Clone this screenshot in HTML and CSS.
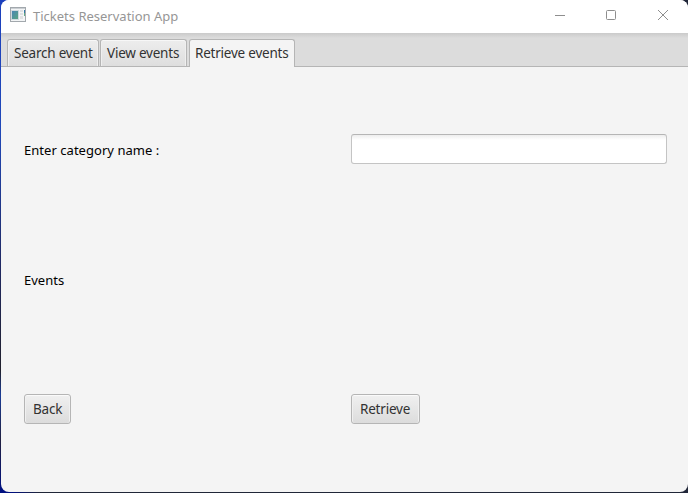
FILE: index.html
```html
<!DOCTYPE html>
<html lang="en">
<head>
<meta charset="utf-8">
<title>Tickets Reservation App</title>
<link rel="stylesheet" href="styles.css">
</head>
<body>
<div class="window">
  <header class="titlebar">
    <svg class="app-icon" width="18" height="16" viewBox="0 0 18 16">
      <defs><linearGradient id="screen" x1="0" y1="0" x2="1" y2="1"><stop offset="0" stop-color="#4a86b4"/><stop offset="1" stop-color="#58a583"/></linearGradient></defs>
      <rect x="1.500" y=".5" width="15" height="14" fill="#f3f5f6" stroke="#a2a8ad"/>
      <path d="M1 1h16" stroke="#a2a8ad"/>
      <rect x="2" y="3" width="8" height="10" fill="#cfd9df"/>
      <rect x="3" y="4" width="6" height="8" fill="url(#screen)"/>
      <path d="M11 3h3v2h-3zM11 6h3v2h-3zM11 9h3v3h-3z" fill="#dfe1e3"/>
      <path d="M15 3h1v3h-1z" fill="#3478a6"/><path d="M15 6h1v3h-1z" fill="#65aa87"/>
    </svg>
    <h1 class="title"><span>Tickets Reservation App</span></h1>
    <svg class="controls" width="114" height="12" viewBox="0 0 114 12" fill="none" stroke="#8e8e8e">
      <path d="M1 6.500h10"/>
      <rect x="52.500" y="1.500" width="9" height="9" rx="1"/>
      <path d="M104 1l10 10M114 1l-10 10"/>
    </svg>
  </header>
  <nav class="tabs">
    <div class="tab search"><span>Search event</span></div>
    <div class="tab view"><span>View events</span></div>
    <div class="tab active"><span>Retrieve events</span></div>
  </nav>
  <main class="form">
    <label class="category" for="category"><span>Enter category name :</span></label>
    <input id="category" type="text">
    <div class="events"><span>Events</span></div>
    <div></div>
    <button class="back"><span>Back</span></button>
    <button class="retrieve"><span>Retrieve</span></button>
  </main>
</div>
</body>
</html>
```
FILE: styles.css
```css
* { box-sizing: border-box; }
body {
  margin: 0;
  height: 493px;
  overflow: hidden;
  padding: 0 0 1px 1px;
  background: linear-gradient(90deg, transparent 12px, #202638 40px), linear-gradient(#1c40bd 0, #2048b8 130px, #202860 270px, #20202c 370px, #1a3c96 395px, #202040 440px, #001080 490px);
  font: 13.500px/18px "Noto Sans", "Open Sans", sans-serif;
  letter-spacing: -.22px;
  color: #323232;
}
span { white-space: nowrap; }
.window {
  height: 492px;
  border-radius: 8px;
  overflow: hidden;
  background: #f4f4f4;
}
.titlebar {
  display: flex;
  align-items: flex-start;
  height: 33px;
  padding: 7px 20px 0 8px;
  background: #fff;
}
.app-icon { flex: none; }
.title {
  flex: 1;
  margin: 0 0 0 6px;
  font-size: 13px;
  font-weight: 400;
  color: #969696;
  letter-spacing: 0;
}
.controls { margin-top: 2px; flex: none; }
.tabs {
  display: flex;
  align-items: flex-end;
  height: 34px;
  padding-left: 6px;
  border-bottom: 1px solid #b5b5b5;
  background: linear-gradient(#cacaca, #dcdcdc 5px);
}
.tab {
  height: 27px;
  padding: 4px 0 0 6px;
  border: 1px solid #b5b5b5;
  border-bottom: 0;
  border-radius: 3px 3px 0 0;
  background: linear-gradient(#ededed, #dedede);
  box-shadow: inset 0 1px #f7f7f7, inset 1px 0 #efefef, inset -1px 0 #efefef;
}
.search { width: 92px; margin-right: 1px; }
.view { width: 87px; margin-right: 2px; }
.active {
  width: 106px;
  height: 28px;
  margin-bottom: -1px;
  padding-left: 5px;
  background: #f4f4f4;
  box-shadow: none;
}
.form {
  display: grid;
  grid-template-columns: 327px 316px;
  grid-template-rows: 30px 30px 30px;
  row-gap: 100px;
  padding: 67px 0 0 23px;
}
.category, .events { padding-top: 7px; color: #000; font-size: 13px; letter-spacing: 0; }
.category { letter-spacing: .04px; }
input {
  width: 316px;
  height: 30px;
  border: 1px solid #c4c4c4;
  border-top-color: #b5b5b5;
  border-radius: 3px;
  background: linear-gradient(#ededed, #fff 5px);
  font: inherit;
}
button {
  height: 30px;
  padding: 0 0 1px 8px;
  border: 1px solid #b5b5b5;
  border-radius: 3px;
  background: linear-gradient(#f0f0f0, #dcdcdc);
  box-shadow: inset 0 1px #fafafa, inset 1px 0 #f0f0f0, inset -1px 0 #f0f0f0;
  font: inherit;
  letter-spacing: -.2px;
  color: inherit;
  text-align: left;
}
.back { width: 47px; }
.retrieve { width: 69px; }
```
